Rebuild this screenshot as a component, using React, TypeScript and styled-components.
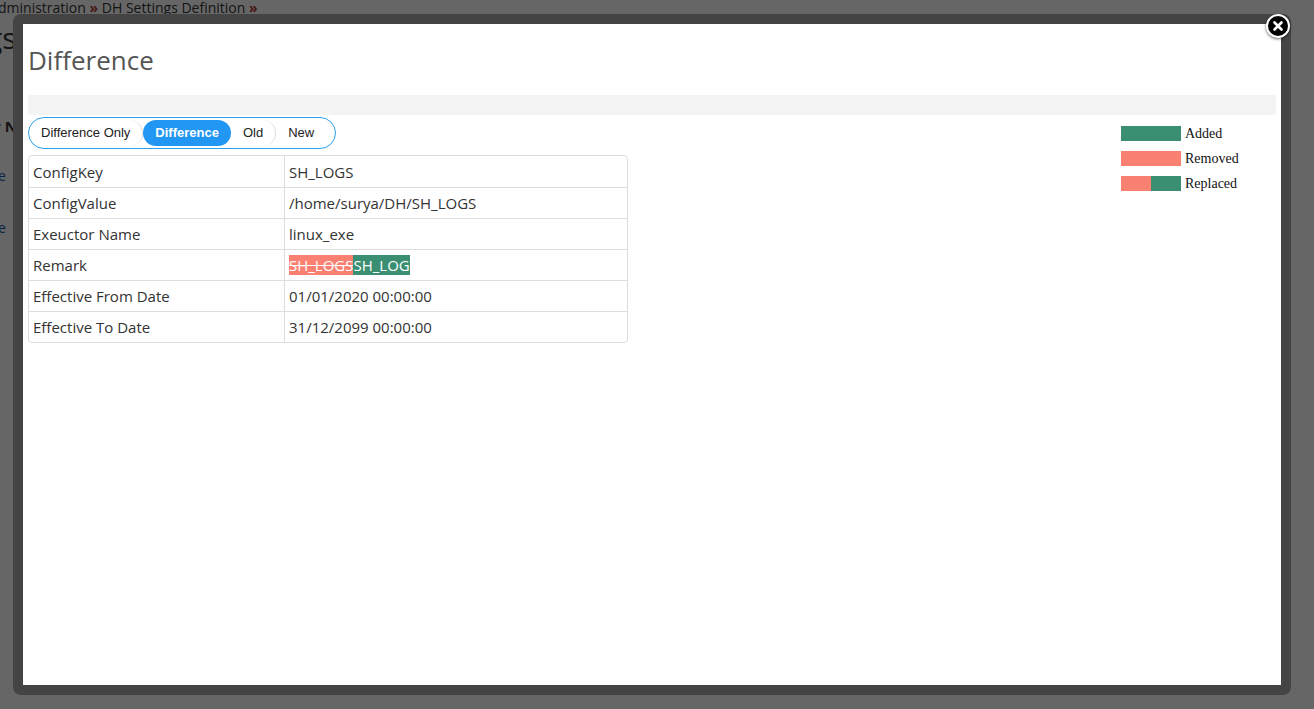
import styled, { createGlobalStyle } from "styled-components";

const Global = createGlobalStyle`
  html, body { margin: 0; padding: 0; }
  body { width: 1314px; height: 709px; overflow: hidden; background: #fff; }
`;

const rows: [string, React.ReactNode][] = [
  ["ConfigKey", "SH_LOGS"],
  ["ConfigValue", "/home/surya/DH/SH_LOGS"],
  ["Exeuctor Name", "linux_exe"],
  ["Remark", null],
  ["Effective From Date", "01/01/2020 00:00:00"],
  ["Effective To Date", "31/12/2099 00:00:00"],
];

const tabs = ["Difference Only", "Difference", "Old", "New"];

export default function App() {
  return (
    <>
      <Global />
      <Page>
        <Crumb>
          dministration <Sep>»</Sep> DH Settings Definition <Sep>»</Sep>
        </Crumb>
        <PageTitle>gs</PageTitle>
        <PageHead>r Na</PageHead>
        <PageLink>e</PageLink>
        <PageLink>e</PageLink>
      </Page>
      <Backdrop>
        <Frame>
          <Modal>
            <Title>Difference</Title>
            <GrayBar />
            <Body>
              <Left>
                <Tabs>
                  {tabs.map((t, i) => (
                    <Tab key={t} $active={i === 1} $last={i === tabs.length - 1}>
                      {t}
                    </Tab>
                  ))}
                </Tabs>
                <Table>
                  {rows.map(([k, v]) => (
                    <Row key={k}>
                      <Cell>{k}</Cell>
                      <Cell $right>
                        {v ?? (
                          <>
                            <Removed>SH_LOGS</Removed>
                            <Added>SH_LOG</Added>
                          </>
                        )}
                      </Cell>
                    </Row>
                  ))}
                </Table>
              </Left>
              <Legend>
                <LegendItem>
                  <Swatch $a="#3a8f72" $b="#3a8f72" /> Added
                </LegendItem>
                <LegendItem>
                  <Swatch $a="#fa8072" $b="#fa8072" /> Removed
                </LegendItem>
                <LegendItem>
                  <Swatch $a="#fa8072" $b="#3a8f72" /> Replaced
                </LegendItem>
              </Legend>
            </Body>
          </Modal>
          <Close>
            <svg width="14" height="14" viewBox="0 0 14 14">
              <path d="M3.5 3.5 L10.5 10.5 M10.5 3.5 L3.5 10.5" stroke="#fff" strokeWidth="2.6" strokeLinecap="round" />
            </svg>
          </Close>
        </Frame>
      </Backdrop>
    </>
  );
}

const Page = styled.div`
  font-family: "Open Sans", sans-serif;
  color: #333;
  margin-left: -2px;
`;

const Crumb = styled.div`
  font-size: 14px;
  height: 18px;
  line-height: 16px;
  color: #333;
`;

const Sep = styled.span`
  color: #b03a2e;
  font-weight: 700;
`;

const PageTitle = styled.div`
  font-size: 30px;
  line-height: 40px;
  margin-left: -12px;
`;

const PageHead = styled.div`
  margin-top: 56px;
  font-weight: 700;
  font-size: 15px;
  line-height: 24px;
  margin-left: -4px;
`;

const PageLink = styled.div`
  margin-top: 24px;
  color: #1a5fa8;
  font-size: 14px;
  line-height: 28px;
`;

const Backdrop = styled.div`
  position: fixed;
  inset: 0;
  background: rgba(0, 0, 0, 0.6);
`;

const Frame = styled.div`
  position: absolute;
  left: 13px;
  top: 14px;
  width: 1258px;
  height: 661px;
  padding: 10px;
  background: #444;
  border-radius: 8px;
`;

const Modal = styled.div`
  height: 100%;
  background: #fff;
  padding: 0 5px;
  box-sizing: border-box;
  font-family: "Open Sans", sans-serif;
`;

const Title = styled.h2`
  margin: 0;
  padding: 19px 0 0;
  height: 71px;
  box-sizing: border-box;
  font-size: 26px;
  font-weight: 400;
  line-height: 34px;
  color: #555;
`;

const GrayBar = styled.div`
  height: 20px;
  background: #f4f4f4;
`;

const Body = styled.div`
  display: flex;
  justify-content: space-between;
  padding-top: 2px;
`;

const Left = styled.div`
  width: 600px;
`;

const Tabs = styled.div`
  display: inline-flex;
  align-items: center;
  height: 32px;
  box-sizing: border-box;
  border: 1px solid #2aa0f0;
  border-radius: 16px;
  padding: 0 9px 0 0;
  font-family: "Liberation Sans", Arial, sans-serif;
  font-size: 13px;
`;

const Tab = styled.div<{ $active: boolean; $last: boolean }>`
  height: 26px;
  line-height: 26px;
  padding: 0 12px;
  border-radius: 13px;
  color: ${(p) => (p.$active ? "#fff" : "#222")};
  background: ${(p) => (p.$active ? "#2196f3" : "transparent")};
  font-weight: ${(p) => (p.$active ? 700 : 400)};
  border-right: ${(p) => (p.$last || p.$active ? "none" : "1px solid #ddd")};
`;

const Table = styled.div`
  margin-top: 6px;
  border: 1px solid #ddd;
  border-radius: 4px;
`;

const Row = styled.div`
  display: grid;
  grid-template-columns: 255px 1fr;
  height: 31px;
  & + & {
    border-top: 1px solid #ddd;
  }
  &:not(:first-child) {
    height: 30px;
  }
`;

const Cell = styled.div<{ $right?: boolean }>`
  display: flex;
  align-items: center;
  padding-left: 4px;
  font-size: 15px;
  color: #333;
  border-left: ${(p) => (p.$right ? "1px solid #ddd" : "none")};
`;

const Removed = styled.span`
  background: #fa8072;
  color: #fff;
  text-decoration: line-through;
`;

const Added = styled.span`
  background: #3a8f72;
  color: #fff;
`;

const Legend = styled.div`
  display: flex;
  flex-direction: column;
  gap: 10px;
  width: 155px;
  padding-top: 9px;
  font-family: "Liberation Serif", serif;
  font-size: 14px;
  color: #111;
`;

const LegendItem = styled.div`
  display: flex;
  align-items: center;
  gap: 4px;
  height: 15px;
`;

const Swatch = styled.span<{ $a: string; $b: string }>`
  width: 60px;
  height: 15px;
  background: linear-gradient(to right, ${(p) => p.$a} 50%, ${(p) => p.$b} 50%);
`;

const Close = styled.div`
  position: absolute;
  top: 0px;
  right: 1px;
  width: 20px;
  height: 20px;
  border-radius: 50%;
  background: #000;
  border: 2px solid #fff;
  box-shadow: 0 1px 3px rgba(0, 0, 0, 0.6);
  display: flex;
  align-items: center;
  justify-content: center;
`;
